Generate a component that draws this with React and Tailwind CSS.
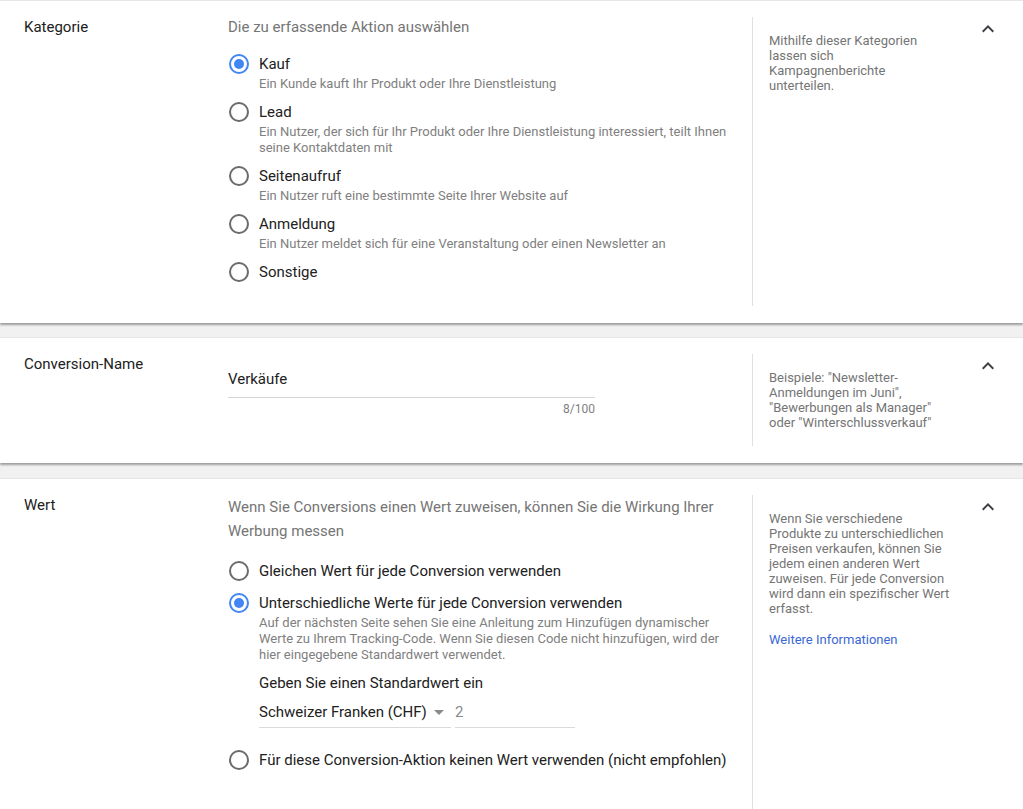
import React, { useState } from 'react';

const font = { fontFamily: 'Roboto, "Noto Sans", Arial, sans-serif' };

const ChevronUp = () => (
  <svg width="24" height="24" viewBox="0 0 24 24" className="block">
    <path d="M12 8l-6 6 1.41 1.41L12 10.83l4.59 4.58L18 14z" fill="#3c4043" />
  </svg>
);

const Radio = ({ checked }) => (
  <span
    className={
      checked
        ? 'flex h-5 w-5 shrink-0 items-center justify-center rounded-full border-2 border-[#4285f4]'
        : 'flex h-5 w-5 shrink-0 items-center justify-center rounded-full border-2 border-[#6b6b6b]'
    }
  >
    {checked && <span className="h-[10px] w-[10px] rounded-full bg-[#4285f4]" />}
  </span>
);

const Option = ({ checked, label, desc, onClick, children }) => (
  <div className={desc ? 'mb-[10px] flex gap-[10px] pl-px' : 'mb-3 flex gap-[10px] pl-px'} onClick={onClick}>
    <Radio checked={checked} />
    <div className="flex-1">
      <div className="text-[15px] leading-5 text-[#212121]">{label}</div>
      {desc && <div className="mt-[2px] text-[13px] leading-4 text-[#808080]">{desc}</div>}
      {children}
    </div>
  </div>
);

const Section = ({ title, side, children, last }) => (
  <div
    className={
      last
        ? 'flex min-h-[340px] border-t border-[#e6e6e6] bg-white pt-4 pl-6'
        : 'flex border-t border-[#e6e6e6] bg-white pt-4 pb-[17px] pl-6 shadow-[0_2px_2px_rgba(0,0,0,0.35)]'
    }
  >
    <div className="w-[204px] shrink-0 text-[15px] leading-5 text-[#212121]">{title}</div>
    <div className="w-[524px] shrink-0 pr-6">{children}</div>
    <div className="w-[208px] shrink-0 border-l border-[#e0e0e0] pt-4 pb-4 pl-4 text-[13px] leading-[15px] text-[#757575]">
      {side}
    </div>
    <div className="pl-4">
      <ChevronUp />
    </div>
  </div>
);

const categories = [
  { label: 'Kauf', desc: 'Ein Kunde kauft Ihr Produkt oder Ihre Dienstleistung' },
  {
    label: 'Lead',
    desc: (
      <>
        Ein Nutzer, der sich für Ihr Produkt oder Ihre Dienstleistung interessiert, teilt Ihnen
        <br />
        seine Kontaktdaten mit
      </>
    ),
  },
  { label: 'Seitenaufruf', desc: 'Ein Nutzer ruft eine bestimmte Seite Ihrer Website auf' },
  { label: 'Anmeldung', desc: 'Ein Nutzer meldet sich für eine Veranstaltung oder einen Newsletter an' },
  { label: 'Sonstige' },
];

export default function App() {
  const [category, setCategory] = useState('Kauf');
  const [valueMode, setValueMode] = useState('different');

  return (
    <div className="min-h-screen bg-[#f1f1f1]" style={font}>
      {/* Kategorie */}
      <Section
        title="Kategorie"
        side={
          <div className="whitespace-nowrap">
            Mithilfe dieser Kategorien
            <br />
            lassen sich
            <br />
            Kampagnenberichte
            <br />
            unterteilen.
          </div>
        }
      >
        <div className="mb-[17px] text-[15px] leading-5 text-[#757575]">Die zu erfassende Aktion auswählen</div>
        <div className="pb-3">
          {categories.map((c) => (
            <Option
              key={c.label}
              checked={category === c.label}
              label={c.label}
              desc={c.desc}
              onClick={() => setCategory(c.label)}
            />
          ))}
        </div>
      </Section>

      <div className="h-[14px]" />

      {/* Conversion-Name */}
      <Section
        title="Conversion-Name"
        side={
          <div className="whitespace-nowrap">
            Beispiele: "Newsletter-
            <br />
            Anmeldungen im Juni",
            <br />
            "Bewerbungen als Manager"
            <br />
            oder "Winterschlussverkauf"
          </div>
        }
      >
        <div className="w-[367px] pt-[13px] pb-[13px]">
          <div className="border-b border-[#d6d6d6] pb-[6px] text-[15px] leading-6 text-[#212121]">Verkäufe</div>
          <div className="mt-[3px] text-right text-xs leading-4 text-[#808080]">8/100</div>
        </div>
      </Section>

      <div className="h-[15px]" />

      {/* Wert */}
      <Section
        last
        title="Wert"
        side={
          <>
            <div className="whitespace-nowrap">
              Wenn Sie verschiedene
              <br />
              Produkte zu unterschiedlichen
              <br />
              Preisen verkaufen, können Sie
              <br />
              jedem einen anderen Wert
              <br />
              zuweisen. Für jede Conversion
              <br />
              wird dann ein spezifischer Wert
              <br />
              erfasst.
            </div>
            <div className="mt-4 text-[#3b68d4]">Weitere Informationen</div>
          </>
        }
      >
        <div className="mb-[18px] text-[15px] leading-6 text-[#757575]">
          Wenn Sie Conversions einen Wert zuweisen, können Sie die Wirkung Ihrer
          <br />
          Werbung messen
        </div>
        <Option
          checked={valueMode === 'same'}
          label="Gleichen Wert für jede Conversion verwenden"
          onClick={() => setValueMode('same')}
        />
        <Option
          checked={valueMode === 'different'}
          label="Unterschiedliche Werte für jede Conversion verwenden"
          onClick={() => setValueMode('different')}
          desc={
            <>
              Auf der nächsten Seite sehen Sie eine Anleitung zum Hinzufügen dynamischer
              <br />
              Werte zu Ihrem Tracking-Code. Wenn Sie diesen Code nicht hinzufügen, wird der
              <br />
              hier eingegebene Standardwert verwendet.
            </>
          }
        >
          <div className="mt-[10px] text-[15px] leading-5 text-[#212121]">Geben Sie einen Standardwert ein</div>
          <div className="mt-[9px] mb-3 flex gap-1">
            <div className="flex w-[192px] items-center justify-between border-b border-[#dadada] pb-[5px]">
              <span className="text-[15px] leading-5 text-[#212121]">Schweizer Franken (CHF)</span>
              <svg width="24" height="20" viewBox="0 2 24 20" className="block">
                <path d="M7 10l5 5 5-5z" fill="#8a8a8a" />
              </svg>
            </div>
            <div className="w-[120px] border-b border-[#dadada] pb-[5px] text-[15px] leading-5 text-[#8a8a8a]">2</div>
          </div>
        </Option>
        <Option
          checked={valueMode === 'none'}
          label="Für diese Conversion-Aktion keinen Wert verwenden (nicht empfohlen)"
          onClick={() => setValueMode('none')}
        />
      </Section>
    </div>
  );
}
